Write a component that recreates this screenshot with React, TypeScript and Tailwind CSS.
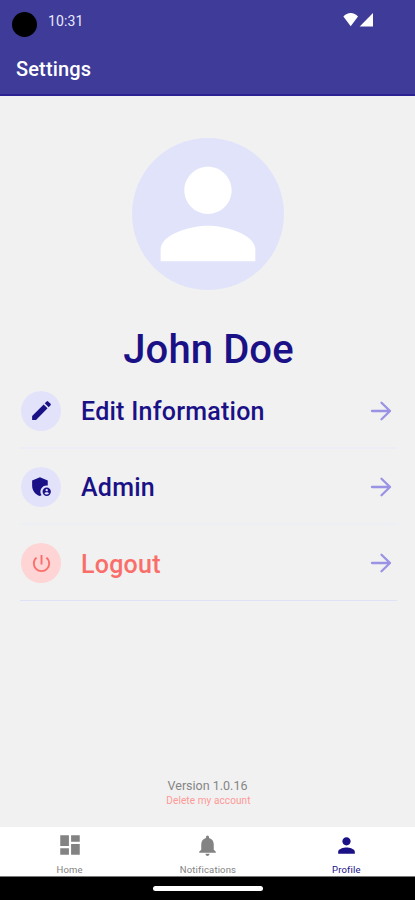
import React from 'react';

const PERSON = 'M12 12c2.21 0 4-1.79 4-4s-1.79-4-4-4-4 1.79-4 4 1.79 4 4 4zm0 2c-2.67 0-8 1.34-8 4v2h16v-2c0-2.66-5.33-4-8-4z';
const PENCIL = 'M3 17.25V21h3.75L17.81 9.94l-3.75-3.75L3 17.25zM20.71 7.04a1 1 0 0 0 0-1.41l-2.34-2.34a1 1 0 0 0-1.41 0l-1.83 1.83 3.75 3.75 1.83-1.83z';
const POWER = 'M13 3h-2v10h2V3zm4.83 2.17-1.42 1.42A6.92 6.92 0 0 1 19 12c0 3.87-3.13 7-7 7s-7-3.13-7-7c0-2.19 1.01-4.14 2.58-5.42L6.17 5.17A8.93 8.93 0 0 0 3 12a9 9 0 0 0 18 0c0-2.74-1.23-5.18-3.17-6.83z';
const BELL = 'M12 22c1.1 0 2-.9 2-2h-4c0 1.1.89 2 2 2zm6-6v-5c0-3.07-1.64-5.64-4.5-6.32V4a1.5 1.5 0 0 0-3 0v.68C7.63 5.36 6 7.92 6 11v5l-2 2v1h16v-1l-2-2z';
const DASHBOARD = 'M3 13h8V3H3v10zm0 8h8v-6H3v6zm10 0h8V11h-8v10zm0-18v6h8V3h-8z';

function Icon({ d, className }: { d: string; className: string }) {
  return (
    <svg viewBox="0 0 24 24" fill="currentColor" className={className}>
      <path d={d} />
    </svg>
  );
}

function AdminIcon() {
  return (
    <svg viewBox="0 0 24 24" fill="currentColor" className="size-[25px]">
      <path d="M17 11c.34 0 .67.04 1 .09V6.27L10.5 3 3 6.27v4.91c0 4.54 3.2 8.79 7.5 9.82.55-.13 1.08-.32 1.6-.55A5.98 5.98 0 0 1 17 11z" />
      <path
        fillRule="evenodd"
        d="M17 13a4 4 0 1 0 0 8 4 4 0 0 0 0-8zm0 1.38a1.12 1.12 0 1 1 0 2.24 1.12 1.12 0 0 1 0-2.24zm0 5.37c-.93 0-1.74-.46-2.24-1.17.05-.72 1.51-1.08 2.24-1.08s2.19.36 2.24 1.08A2.73 2.73 0 0 1 17 19.75z"
      />
    </svg>
  );
}

function Row({ label, icon, tone, line }: { label: string; icon: React.ReactNode; tone: string; line: string }) {
  return (
    <div className={`flex h-[76px] items-center pt-px pr-[5px] pl-px ${line}`}>
      <div className={`flex h-10 w-10 shrink-0 items-center justify-center rounded-full ${tone}`}>{icon}</div>
      <span className="ml-[20px] flex-1 pt-[3px] text-[25px] leading-8 font-medium tracking-[0.25px]">{label}</span>
      <svg viewBox="0 0 22 22" className="size-[22px] text-[#9a92e4]" fill="none" stroke="currentColor" strokeWidth="2.3" strokeLinecap="round" strokeLinejoin="round">
        <path d="M2 11h18M11.5 2.7l8.5 8.3-8.5 8.3" />
      </svg>
    </div>
  );
}

function Tab({ label, d, color, size }: { label: string; d: string; color: string; size: string }) {
  return (
    <div className={`flex flex-1 flex-col items-center pt-[5px] pl-px ${color}`}>
      <div className="flex h-[26px] items-center">
        <Icon d={d} className={size} />
      </div>
      <span className="mt-[6px] text-[9.5px] leading-3 tracking-[0.15px]">{label}</span>
    </div>
  );
}

export default function App() {
  return (
    <div className="flex h-[900px] w-[415px] flex-col overflow-hidden bg-[#f1f1f1] font-['Roboto',sans-serif]">
      <header className="h-24 shrink-0 border-b-2 border-[#2b2193] bg-[#3e3b99] text-white">
        <div className="flex h-[42px] items-start pl-3">
          <div className="mt-[12px] size-[25px] rounded-full bg-black" />
          <span className="mt-[12px] ml-[11px] text-[14px] leading-[18px] tracking-[0.1px] text-[#e9e8fb]">10:31</span>
          <svg viewBox="0 0 32 16" className="mt-[12px] mr-[41px] ml-auto h-4 w-8" fill="white">
            <path d="M1.4 4.6C5.2-.1 12.3-.1 16 4.6L8.7 14.2z" />
            <path d="M31 1v13.5H17.7z" />
          </svg>
        </div>
        <h1 className="pt-[14px] pl-4 text-[20px] leading-[27px] font-medium tracking-[0.15px]">Settings</h1>
      </header>

      <main className="flex flex-1 flex-col pt-[42px] pr-[18px] pl-5">
        <div className="mr-[2px] flex size-[152px] items-center justify-center self-center rounded-full bg-[#e1e3fa] text-white">
          <Icon d={PERSON} className="size-[142px]" />
        </div>
        <h2 className="mt-[36px] text-center text-[40px] leading-[48px] font-medium tracking-[0.1px] text-[#1b1187]">John Doe</h2>
        <div className="-mt-px text-[#1b1187]">
          <Row label="Edit Information" tone="bg-[#e2e3fb]" line="border-b-2 border-[#ededf7]" icon={<Icon d={PENCIL} className="size-[25px]" />} />
          <Row label="Admin" tone="bg-[#e2e3fb]" line="border-b-2 border-[#eeeff4]" icon={<AdminIcon />} />
          <div className="text-[#fa6e6a]">
            <Row label="Logout" tone="bg-[#fed4d5]" line="border-b border-[#dfe1f6]" icon={<Icon d={POWER} className="size-[23px]" />} />
          </div>
        </div>
        <div className="mt-auto flex flex-col items-center pb-[20px]">
          <span className="mr-[2px] text-[12.5px] leading-4 text-[#858585]">Version 1.0.16</span>
          <span className="text-[10px] leading-[13px] tracking-[0.1px] text-[#ff9896]">Delete my account</span>
        </div>
      </main>

      <nav className="flex h-[50px] shrink-0 border-b border-[#777] bg-white">
        <Tab label="Home" d={DASHBOARD} color="text-[#838383]" size="size-[26px]" />
        <Tab label="Notifications" d={BELL} color="text-[#838383]" size="size-[25px]" />
        <Tab label="Profile" d={PERSON} color="text-[#1b1187]" size="size-[25px]" />
      </nav>
      <div className="flex h-[23px] shrink-0 justify-center bg-black pt-[9px]">
        <div className="h-[5px] w-[110px] rounded-full bg-white" />
      </div>
    </div>
  );
}
